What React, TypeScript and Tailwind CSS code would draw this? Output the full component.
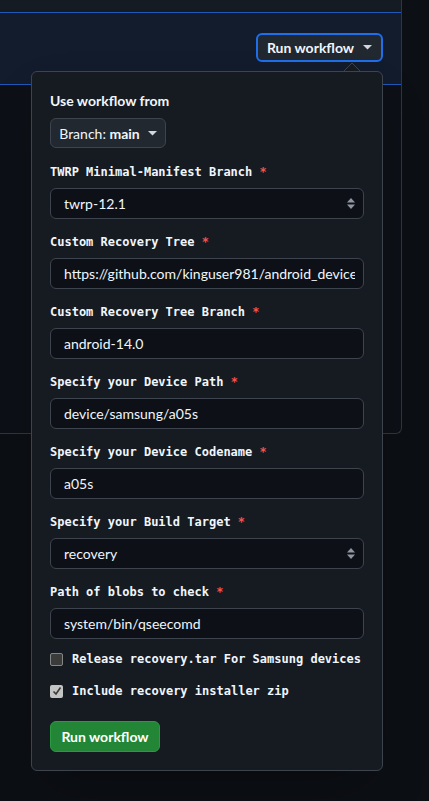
import React from "react";

const mono = { fontFamily: '"DejaVu Sans Mono", "Liberation Mono", monospace' };

function Caret({ className = "" }: { className?: string }) {
  return (
    <svg width="9" height="5" viewBox="0 0 9 5" className={className} fill="currentColor">
      <path d="M0 0 L9 0 L4.5 4.5 Z" />
    </svg>
  );
}

function UpDown() {
  return (
    <svg width="8" height="11" viewBox="0 0 8 11" className="text-[#9198a1]" fill="currentColor">
      <path d="M4 0 L8 4.5 L0 4.5 Z" />
      <path d="M0 6.5 L8 6.5 L4 11 Z" />
    </svg>
  );
}

function Field({ label, value, select }: { label: string; value: string; select?: boolean }) {
  return (
    <div className="flex flex-col">
      <div className="h-[18px] leading-[18px] text-[12px] font-bold text-[#f0f6fc] whitespace-nowrap" style={mono}>
        {label} <span className="text-[#f85149]">*</span>
      </div>
      <div className="mt-[7px] h-[31px] rounded-md border border-[#3d444d] bg-[#0d1117] flex items-center pl-[13px] pr-[8px] overflow-hidden">
        <span className="flex-1 whitespace-nowrap overflow-hidden text-[14px] text-[#f0f6fc]">{value}</span>
        {select && <UpDown />}
      </div>
    </div>
  );
}

export default function App() {
  return (
    <div
      className="relative w-[429px] h-[801px] overflow-hidden bg-[#0c0f14]"
      style={{ fontFamily: 'Lato, "Noto Sans", "Liberation Sans", sans-serif' }}
    >
      {/* background panel */}
      <div className="w-[402px] h-[434px] bg-[#0d1117] border-r border-b border-[#30363d] rounded-br-md overflow-hidden">
        <div className="h-[12px] bg-[#151b23]" />
        <div className="h-[73px] border-y border-[#1f58b8] bg-[#121c2d] flex justify-end items-start pt-[20px] pr-[18px]">
          <button className="h-[29px] w-[127px] rounded-md border-2 border-[#1f6feb] bg-[#212830] flex items-center justify-center gap-[9px] text-[14px] font-bold text-[#f0f6fc] whitespace-nowrap">
            <span>Run workflow</span>
            <Caret className="text-[#d1d7e0]" />
          </button>
        </div>
      </div>

      {/* popover caret */}
      <svg className="absolute left-[343px] top-[62px]" width="18" height="10" viewBox="0 0 18 10">
        <path d="M0 10 L9 1 L18 10" fill="#161b22" stroke="#3d444d" strokeWidth="1" />
      </svg>

      {/* popover */}
      <div className="absolute left-[31px] top-[71px] w-[352px] h-[700px] rounded-md border border-[#3d444d] bg-[#161b22] pt-[19px] px-[18px] shadow-2xl">
        <div className="h-[20px] leading-[20px] text-[14px] font-bold text-[#f0f6fc]">Use workflow from</div>
        <button className="mt-[7px] h-[30px] w-[116px] rounded-md border border-[#3d444d] bg-[#212830] flex items-center justify-center gap-[8px] text-[14px] text-[#f0f6fc] whitespace-nowrap">
          <span>
            Branch: <span className="font-bold">main</span>
          </span>
          <Caret className="text-[#d1d7e0]" />
        </button>

        <div className="mt-[15px] flex flex-col gap-[14px]">
          <Field label="TWRP Minimal-Manifest Branch" value="twrp-12.1" select />
          <Field label="Custom Recovery Tree" value="https://github.com/kinguser981/android_device_samsung_a05s" />
          <Field label="Custom Recovery Tree Branch" value="android-14.0" />
          <Field label="Specify your Device Path" value="device/samsung/a05s" />
          <Field label="Specify your Device Codename" value="a05s" />
          <Field label="Specify your Build Target" value="recovery" select />
          <Field label="Path of blobs to check" value="system/bin/qseecomd" />
        </div>

        <div className="mt-[13px] flex items-center h-[14px] gap-[9px]">
          <span className="w-[13px] h-[13px] rounded-[2px] bg-[#3b3b3b] border border-[#858585]" />
          <span className="text-[12px] font-bold text-[#f0f6fc] whitespace-nowrap" style={mono}>
            Release recovery.tar For Samsung devices
          </span>
        </div>
        <div className="mt-[18px] flex items-center h-[14px] gap-[9px]">
          <span className="w-[13px] h-[13px] rounded-[2px] bg-[#c4c4c4] flex items-center justify-center">
            <svg width="10" height="10" viewBox="0 0 10 10">
              <path d="M1.5 5.5 L4 8 L8.5 1.5" fill="none" stroke="#3a3a3a" strokeWidth="1.6" />
            </svg>
          </span>
          <span className="text-[12px] font-bold text-[#f0f6fc] whitespace-nowrap" style={mono}>
            Include recovery installer zip
          </span>
        </div>

        <button className="mt-[23px] h-[31px] w-[110px] rounded-md bg-[#238636] border border-[#2b9a42] text-[14px] font-bold text-white whitespace-nowrap">
          Run workflow
        </button>
      </div>
    </div>
  );
}
